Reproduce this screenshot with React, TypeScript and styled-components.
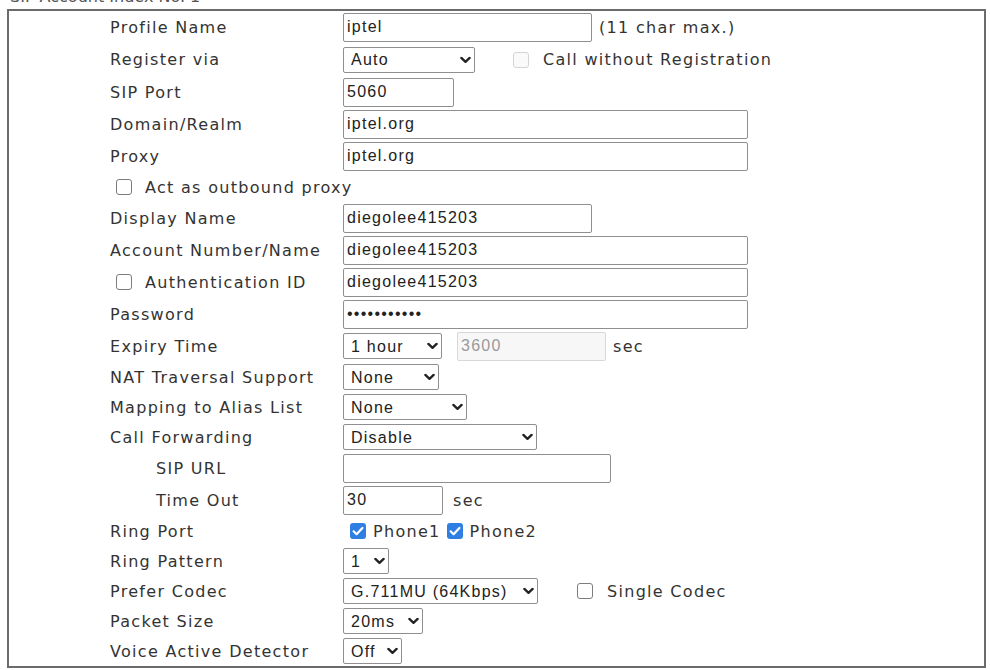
import React from "react";
import styled, { createGlobalStyle } from "styled-components";

const GlobalStyle = createGlobalStyle`
  html, body { margin: 0; padding: 0; background: #fff; }
  body { font-family: "DejaVu Sans", Verdana, sans-serif; }
`;

const Page = styled.div`
  width: 990px;
  height: 670px;
  overflow: hidden;
  box-sizing: border-box;
  padding: 0 4px 0 7px;
`;

const Caption = styled.div`
  height: 9px;
  overflow: hidden;
  padding-left: 3px;
`;

const CaptionText = styled.div`
  margin-top: -12px;
  font-size: 16px;
  line-height: 18px;
  color: #555;
  white-space: nowrap;
`;

const Frame = styled.div`
  box-sizing: border-box;
  height: 659px;
  border: 2px solid #6b6b6b;
  display: flex;
  flex-direction: column;
`;

const Row = styled.div<{ $h: number }>`
  display: flex;
  align-items: center;
  flex-shrink: 0;
  height: ${(p) => p.$h}px;
  padding-left: 101px;
`;

const Label = styled.div<{ $indent?: boolean }>`
  box-sizing: border-box;
  width: 233px;
  flex-shrink: 0;
  display: flex;
  align-items: center;
  padding-left: ${(p) => (p.$indent ? 46 : 0)}px;
  font-size: 16px;
  letter-spacing: 1.3px;
  color: #333;
  white-space: nowrap;
`;

const CheckLabel = styled.label<{ $gap?: number }>`
  display: flex;
  align-items: center;
  gap: ${(p) => p.$gap ?? 13}px;
  padding-left: 6px;
  font-size: 16px;
  letter-spacing: 1.3px;
  color: #333;
  white-space: nowrap;
`;

const Cell = styled.div`
  display: flex;
  align-items: center;
`;

const Text = styled.span<{ $ml?: number }>`
  margin-left: ${(p) => p.$ml ?? 0}px;
  font-size: 16px;
  letter-spacing: 1.3px;
  color: #333;
  white-space: nowrap;
`;

const TextInput = styled.input<{ $w: number; $ml?: number }>`
  box-sizing: border-box;
  width: ${(p) => p.$w}px;
  height: 29px;
  margin: 0 0 0 ${(p) => p.$ml ?? 0}px;
  border: 1px solid #8f8f8f;
  border-radius: 2px;
  padding: 0 3px;
  font-family: "Liberation Sans", Arial, sans-serif;
  font-size: 16px;
  letter-spacing: 1.25px;
  color: #222;
  background: #fff;
  outline: none;
  &:disabled {
    background: #f7f7f7;
    border-color: #d8d8d8;
    color: #9a9a9a;
  }
`;

const SelectWrap = styled.div<{ $w: number }>`
  position: relative;
  flex-shrink: 0;
  width: ${(p) => p.$w}px;
  height: 26px;
`;

const NativeSelect = styled.select`
  appearance: none;
  -webkit-appearance: none;
  box-sizing: border-box;
  width: 100%;
  height: 100%;
  margin: 0;
  border: 1px solid #8f8f8f;
  border-radius: 2px;
  padding: 0 16px 0 7px;
  font-family: "Liberation Sans", Arial, sans-serif;
  font-size: 16px;
  letter-spacing: 1.25px;
  color: #222;
  background: #fff;
  outline: none;
`;

const Chevron = styled.svg`
  position: absolute;
  right: 4px;
  top: 50%;
  width: 11px;
  height: 7px;
  transform: translateY(-50%);
  pointer-events: none;
`;

const Box = styled.span<{ $checked?: boolean; $disabled?: boolean; $ml?: number }>`
  box-sizing: border-box;
  display: inline-flex;
  align-items: center;
  justify-content: center;
  flex-shrink: 0;
  width: 16px;
  height: 16px;
  margin-left: ${(p) => p.$ml ?? 0}px;
  border-radius: 3px;
  border: ${(p) =>
    p.$checked ? "none" : `1.5px solid ${p.$disabled ? "#d4d4d4" : "#7c7c7c"}`};
  background: ${(p) => (p.$checked ? "#2f7fe3" : p.$disabled ? "#fafafa" : "#fff")};
`;

const Select = ({ w, value }: { w: number; value: string }) => (
  <SelectWrap $w={w}>
    <NativeSelect defaultValue={value}>
      <option value={value}>{value}</option>
    </NativeSelect>
    <Chevron viewBox="0 0 11 7">
      <path
        d="M1.4 1.4 L5.5 5.4 L9.6 1.4"
        fill="none"
        stroke="#222"
        strokeWidth="2.3"
        strokeLinecap="round"
        strokeLinejoin="round"
      />
    </Chevron>
  </SelectWrap>
);

const Check = ({
  checked,
  disabled,
  ml,
}: {
  checked?: boolean;
  disabled?: boolean;
  ml?: number;
}) => (
  <Box $checked={checked} $disabled={disabled} $ml={ml}>
    {checked && (
      <svg width="16" height="16" viewBox="0 0 16 16">
        <path
          d="M3.6 8.3 L6.6 11.2 L12.4 4.9"
          fill="none"
          stroke="#fff"
          strokeWidth="2.2"
          strokeLinecap="round"
          strokeLinejoin="round"
        />
      </svg>
    )}
  </Box>
);

export default function App() {
  return (
    <>
      <GlobalStyle />
      <Page>
        <Caption>
          <CaptionText>SIP Account Index No. 1</CaptionText>
        </Caption>
        <Frame>
          <Row $h={32}>
            <Label>Profile Name</Label>
            <Cell>
              <TextInput $w={249} defaultValue="iptel" />
              <Text $ml={7}>(11 char max.)</Text>
            </Cell>
          </Row>
          <Row $h={33}>
            <Label>Register via</Label>
            <Cell>
              <Select w={132} value="Auto" />
              <Check disabled ml={38} />
              <Text $ml={14}>Call without Registration</Text>
            </Cell>
          </Row>
          <Row $h={32}>
            <Label>SIP Port</Label>
            <Cell>
              <TextInput $w={111} defaultValue="5060" />
            </Cell>
          </Row>
          <Row $h={32}>
            <Label>Domain/Realm</Label>
            <Cell>
              <TextInput $w={405} defaultValue="iptel.org" />
            </Cell>
          </Row>
          <Row $h={32}>
            <Label>Proxy</Label>
            <Cell>
              <TextInput $w={405} defaultValue="iptel.org" />
            </Cell>
          </Row>
          <Row $h={30}>
            <CheckLabel>
              <Check />
              Act as outbound proxy
            </CheckLabel>
          </Row>
          <Row $h={32}>
            <Label>Display Name</Label>
            <Cell>
              <TextInput $w={249} defaultValue="diegolee415203" />
            </Cell>
          </Row>
          <Row $h={32}>
            <Label>Account Number/Name</Label>
            <Cell>
              <TextInput $w={405} defaultValue="diegolee415203" />
            </Cell>
          </Row>
          <Row $h={32}>
            <Label>
              <CheckLabel>
                <Check />
                Authentication ID
              </CheckLabel>
            </Label>
            <Cell>
              <TextInput $w={405} defaultValue="diegolee415203" />
            </Cell>
          </Row>
          <Row $h={32}>
            <Label>Password</Label>
            <Cell>
              <TextInput $w={405} type="password" defaultValue="abcdefghijk" />
            </Cell>
          </Row>
          <Row $h={32}>
            <Label>Expiry Time</Label>
            <Cell>
              <Select w={99} value="1 hour" />
              <TextInput $w={149} $ml={15} defaultValue="3600" disabled />
              <Text $ml={7}>sec</Text>
            </Cell>
          </Row>
          <Row $h={30}>
            <Label>NAT Traversal Support</Label>
            <Cell>
              <Select w={96} value="None" />
            </Cell>
          </Row>
          <Row $h={30}>
            <Label>Mapping to Alias List</Label>
            <Cell>
              <Select w={124} value="None" />
            </Cell>
          </Row>
          <Row $h={30}>
            <Label>Call Forwarding</Label>
            <Cell>
              <Select w={194} value="Disable" />
            </Cell>
          </Row>
          <Row $h={32}>
            <Label $indent>SIP URL</Label>
            <Cell>
              <TextInput $w={268} defaultValue="" />
            </Cell>
          </Row>
          <Row $h={32}>
            <Label $indent>Time Out</Label>
            <Cell>
              <TextInput $w={100} defaultValue="30" />
              <Text $ml={10}>sec</Text>
            </Cell>
          </Row>
          <Row $h={30}>
            <Label>Ring Port</Label>
            <Cell>
              <Check checked ml={7} />
              <Text $ml={7}>Phone1</Text>
              <Check checked ml={6} />
              <Text $ml={7}>Phone2</Text>
            </Cell>
          </Row>
          <Row $h={30}>
            <Label>Ring Pattern</Label>
            <Cell>
              <Select w={46} value="1" />
            </Cell>
          </Row>
          <Row $h={30}>
            <Label>Prefer Codec</Label>
            <Cell>
              <Select w={195} value="G.711MU (64Kbps)" />
              <Check ml={39} />
              <Text $ml={14}>Single Codec</Text>
            </Cell>
          </Row>
          <Row $h={30}>
            <Label>Packet Size</Label>
            <Cell>
              <Select w={80} value="20ms" />
            </Cell>
          </Row>
          <Row $h={30}>
            <Label>Voice Active Detector</Label>
            <Cell>
              <Select w={59} value="Off" />
            </Cell>
          </Row>
        </Frame>
      </Page>
    </>
  );
}
